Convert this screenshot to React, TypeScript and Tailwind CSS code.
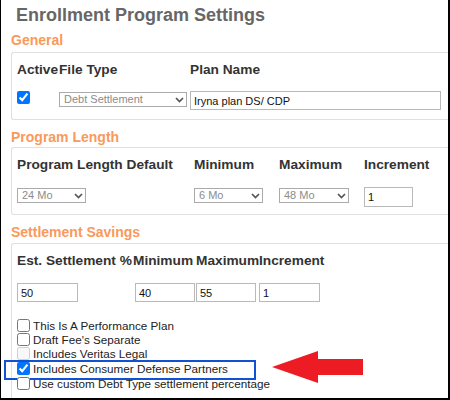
import React from 'react';

const Chevron = () => (
    <svg className="pointer-events-none absolute right-[3px] top-1/2 -translate-y-1/2" width="9" height="6" viewBox="0 0 9 6">
        <polyline points="1,1 4.5,4.5 8,1" fill="none" stroke="#555" strokeWidth="1.7" />
    </svg>
);

function Select({ value, className }: { value: string; className: string }) {
    return (
        <div className={`relative ${className}`}>
            <select
                defaultValue={value}
                className="block appearance-none w-full h-full border border-[#ababab] bg-white pl-[4px] py-0 text-[11px] leading-[13px] text-[#8c8c8c] outline-none"
            >
                <option>{value}</option>
            </select>
            <Chevron />
        </div>
    );
}

function TextBox({ value, className }: { value: string; className: string }) {
    return (
        <input
            defaultValue={value}
            className={`block border border-[#b9b9b9] bg-white px-[3px] py-0 text-[11px] leading-[13px] text-[#111] outline-none ${className}`}
        />
    );
}

const SectionLabel = ({ children, className }: { children: React.ReactNode; className: string }) => (
    <div className={`ml-[10px] text-[14px] leading-[16px] font-bold text-[#f9995b] ${className}`}>{children}</div>
);

const panel = 'ml-[10px] border-y border-l border-[#e0e0e0] rounded-l-[3px] px-[5px] pt-[9px]';

const options = [
    { label: 'This Is A Performance Plan', h: 'h-[14px]' },
    { label: "Draft Fee's Separate", h: 'h-[14px]' },
    { label: 'Includes Veritas Legal', h: 'h-[14px]', disabled: true },
    { label: 'Includes Consumer Defense Partners', h: 'h-[16px]', checked: true, marked: true },
    { label: 'Use custom Debt Type settlement percentage', h: 'h-[14px]' },
];

export default function App() {
    return (
        <div className="w-[450px] h-[400px] overflow-clip bg-white border-l border-r-2 border-b-2 border-black font-['Liberation_Sans',Arial,sans-serif]">
            <h1 className="pt-[5px] pl-[15px] text-[18px] leading-[20px] font-bold text-[#666]">Enrollment Program Settings</h1>

            <SectionLabel className="mt-[7px]">General</SectionLabel>
            <div className={`mt-[4px] pb-[9px] ${panel}`}>
                <div className="flex text-[13.7px] leading-[16px] font-bold text-[#333]">
                    <span className="w-[42px]">Active</span>
                    <span className="w-[131px]">File Type</span>
                    <span>Plan Name</span>
                </div>
                <div className="mt-[13px] flex items-start h-[19px]">
                    <div className="w-[42px]">
                        <input type="checkbox" defaultChecked className="block w-[13px] h-[13px]" />
                    </div>
                    <Select value="Debt Settlement" className="mt-[1px] w-[128px] h-[15px]" />
                    <TextBox value="Iryna plan DS/ CDP" className="ml-[3px] w-[251px] h-[19px]" />
                </div>
            </div>

            <SectionLabel className="mt-[9px]">Program Length</SectionLabel>
            <div className={`mt-[2px] pb-[7px] ${panel}`}>
                <div className="flex text-[13.7px] leading-[16px] font-bold text-[#333]">
                    <span className="w-[177px]">Program Length Default</span>
                    <span className="w-[85px]">Minimum</span>
                    <span className="w-[85px]">Maximum</span>
                    <span>Increment</span>
                </div>
                <div className="mt-[14px] flex items-start h-[20px]">
                    <div className="w-[177px]">
                        <Select value="24 Mo" className="mt-[1px] w-[69px] h-[15px]" />
                    </div>
                    <div className="w-[85px]">
                        <Select value="6 Mo" className="mt-[1px] w-[69px] h-[15px]" />
                    </div>
                    <div className="w-[85px]">
                        <Select value="48 Mo" className="mt-[1px] w-[70px] h-[15px]" />
                    </div>
                    <TextBox value="1" className="w-[49px] h-[20px]" />
                </div>
            </div>

            <SectionLabel className="mt-[9px]">Settlement Savings</SectionLabel>
            <div className={`mt-[3px] h-[200px] ${panel}`}>
                <div className="flex text-[13.7px] leading-[16px] font-bold text-[#333] whitespace-nowrap">
                    <span className="w-[116px]">Est. Settlement %</span>
                    <span className="w-[63px]">Minimum</span>
                    <span className="w-[63px]">Maximum</span>
                    <span>Increment</span>
                </div>
                <div className="mt-[14px] flex items-start">
                    <div className="w-[118px]">
                        <TextBox value="50" className="w-[61px] h-[19px]" />
                    </div>
                    <TextBox value="40" className="w-[60px] h-[19px]" />
                    <TextBox value="55" className="ml-[1px] w-[60px] h-[19px]" />
                    <TextBox value="1" className="ml-[3px] w-[61px] h-[19px]" />
                </div>
                <div className="mt-[16px] flex flex-col">
                    {options.map((o) => (
                        <div key={o.label} className={`relative flex items-center ${o.h}`}>
                            <input
                                type="checkbox"
                                defaultChecked={o.checked}
                                disabled={o.disabled}
                                className="block w-[13px] h-[13px] shrink-0"
                            />
                            <span className="ml-[3px] text-[11.7px] leading-[13px] text-[#222] whitespace-nowrap">{o.label}</span>
                            {o.marked && (
                                <>
                                    <div className="absolute left-[-13px] top-0 w-[252px] h-[20px] border-2 border-[#1250d4]" />
                                    <svg className="absolute left-[255px] top-[-9px]" width="91" height="32" viewBox="0 0 91 32">
                                        <polygon points="0,16 46,0 46,8 91,8 91,24 46,24 46,32" fill="#ed1c24" />
                                    </svg>
                                </>
                            )}
                        </div>
                    ))}
                </div>
            </div>
        </div>
    );
}
